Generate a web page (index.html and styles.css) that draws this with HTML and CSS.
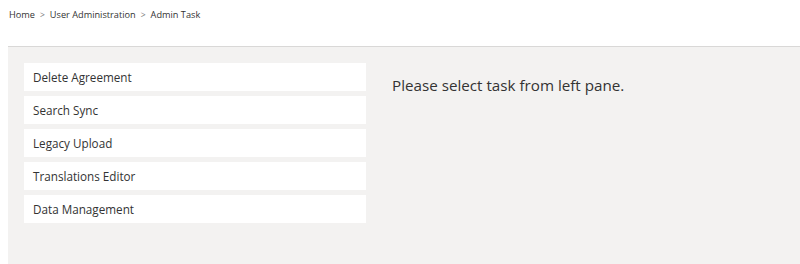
FILE: index.html
```html
<!DOCTYPE html>
<html>
<head>
<meta charset="utf-8">
<link rel="stylesheet" href="styles.css">
</head>
<body>
<nav class="breadcrumb">
  <span class="crumb">Home</span>
  <span class="sep">&gt;</span>
  <span class="crumb">User Administration</span>
  <span class="sep">&gt;</span>
  <span class="crumb">Admin Task</span>
</nav>
<main class="panel">
  <ul class="task-list">
    <li class="task">Delete Agreement</li>
    <li class="task">Search Sync</li>
    <li class="task">Legacy Upload</li>
    <li class="task">Translations Editor</li>
    <li class="task">Data Management</li>
  </ul>
  <div class="content">
    <p class="hint">Please select task from left pane.</p>
  </div>
</main>
</body>
</html>
```

FILE: styles.css
```css
html, body {
  margin: 0;
  padding: 0;
  height: 100%;
  background: #ffffff;
  font-family: "Open Sans", "Noto Sans", sans-serif;
  color: #333333;
}
body {
  display: flex;
  flex-direction: column;
}
.breadcrumb {
  height: 46px;
  box-sizing: border-box;
  padding: 8px 0 0 9px;
  font-size: 9.2px;
  line-height: 14px;
  display: flex;
  gap: 5px;
  color: #333333;
}
.sep {
  color: #777777;
  font-size: 8.5px;
}
.panel {
  flex: 1;
  margin-left: 8px;
  border-top: 1px solid #d9d8d7;
  background: #f3f2f1;
  display: flex;
  padding: 16px 0 0 16px;
  gap: 26px;
}
.task-list {
  list-style: none;
  margin: 0;
  padding: 0;
  width: 342px;
  display: flex;
  flex-direction: column;
  gap: 5px;
}
.task {
  height: 28px;
  box-sizing: border-box;
  background: #ffffff;
  padding: 1px 9px 0;
  font-size: 11.7px;
  line-height: 27px;
  color: #333333;
}
.content {
  flex: 1;
}
.hint {
  margin: 12px 0 0 0;
  font-size: 15.2px;
  line-height: 20px;
  color: #333333;
}
```
